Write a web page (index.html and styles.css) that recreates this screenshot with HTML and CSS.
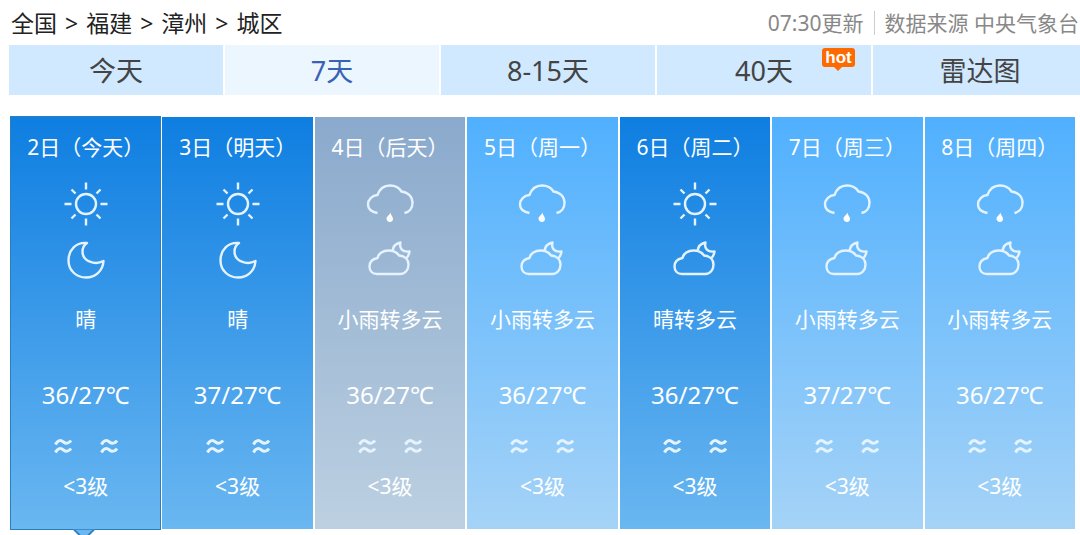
FILE: index.html
```html
<!DOCTYPE html>
<html lang="zh-CN">
<head>
  <meta charset="utf-8">
  <title>漳州天气预报</title>
  <link rel="stylesheet" href="styles.css">
</head>
<body>
  <svg class="sprite" aria-hidden="true">
    <symbol id="sun" viewBox="0 0 50 50">
      <circle cx="25" cy="25" r="10"/>
      <path d="M25 3.5v7M25 39.5v7M3.5 25h7M39.5 25h7M10.5 10.5l4 4M35.5 35.5l4 4M39.5 10.5l-4 4M14.5 35.5l-4 4"/>
    </symbol>
    <symbol id="moon" viewBox="0 0 50 50">
      <path d="M26 8C15 7 7.500 15 7.500 25.500C7.500 35.500 15.500 42.500 25 42.500C34.500 42.500 42 35.500 42.500 26C34 30.500 21.500 26.500 21.500 16.500C21.500 12.500 23 10 26 8Z"/>
    </symbol>
    <symbol id="rain" viewBox="0 0 50 50">
      <path d="M12.500 34C6.500 33 3 30 3 25.500C3 20.500 7 16.500 12.500 16C14.500 10 19 6.500 25 6.500C30 6.500 34 8.500 36.500 12.500C43.500 13.500 47.500 18 47.500 24C47.500 29 44.500 33 39.500 34"/>
      <path class="drop" d="M25.500 33.500C25.500 36 28 37.500 28 40C28 42 26.500 43 25 43C23 43 21.500 41.800 21.500 39.800C21.500 37.500 24.500 36 25.500 33.500Z"/>
    </symbol>
    <symbol id="cloud-night" viewBox="0 0 50 50">
      <path d="M12 39C7.500 39 4.500 36 4.500 31.500C4.500 27 7.500 24 12.500 23C13.500 18.500 18 15.500 23.500 15.500C28.500 15.500 32 17.500 34 20.500C40 21 43.500 24.500 43.500 29.500C43.500 35 40 39 35.500 39Z"/>
      <path d="M27.500 16C28 11.500 31 8.500 35.500 7.500C34 13.500 37.500 17.500 44.500 16.500C44 19.500 43 22 41 23.500"/>
    </symbol>
    <symbol id="wind" viewBox="0 0 64 16">
      <path d="M1.500 6.500C4 1.500 7 2 9.500 4S15 5.500 17 2.500M1.500 14.500C4 9.500 7 10 9.500 12S15 13.500 17 10.500M47.500 6.500C50 1.500 53 2 55.500 4S61 5.500 63 2.500M47.500 14.500C50 9.500 53 10 55.500 12S61 13.500 63 10.500"/>
    </symbol>
  </svg>

  <header class="header">
    <nav class="crumbs">
      <a href="#">全国</a>
      <span>&gt;</span>
      <a href="#">福建</a>
      <span>&gt;</span>
      <a href="#">漳州</a>
      <span>&gt;</span>
      <span>城区</span>
    </nav>
    <div class="source">
      <span class="updated">07:30更新</span>
      <span class="origin">数据来源 中央气象台</span>
    </div>
  </header>

  <nav class="tabs">
    <a class="tab" href="#">今天</a>
    <a class="tab active" href="#">7天</a>
    <a class="tab" href="#">8-15天</a>
    <a class="tab" href="#">40天<span class="hot">hot</span></a>
    <a class="tab" href="#">雷达图</a>
  </nav>

  <ul class="week">
    <li class="day clear selected">
      <h2 class="date">2日（今天）</h2>
      <svg class="icon"><use href="#sun"/></svg>
      <svg class="icon"><use href="#moon"/></svg>
      <p class="weather">晴</p>
      <p class="temp">36/27℃</p>
      <svg class="wind"><use href="#wind"/></svg>
      <p class="level">&lt;3级</p>
    </li>
    <li class="day clear">
      <h2 class="date">3日（明天）</h2>
      <svg class="icon"><use href="#sun"/></svg>
      <svg class="icon"><use href="#moon"/></svg>
      <p class="weather">晴</p>
      <p class="temp">37/27℃</p>
      <svg class="wind"><use href="#wind"/></svg>
      <p class="level">&lt;3级</p>
    </li>
    <li class="day rainy">
      <h2 class="date">4日（后天）</h2>
      <svg class="icon"><use href="#rain"/></svg>
      <svg class="icon"><use href="#cloud-night"/></svg>
      <p class="weather">小雨转多云</p>
      <p class="temp">36/27℃</p>
      <svg class="wind"><use href="#wind"/></svg>
      <p class="level">&lt;3级</p>
    </li>
    <li class="day">
      <h2 class="date">5日（周一）</h2>
      <svg class="icon"><use href="#rain"/></svg>
      <svg class="icon"><use href="#cloud-night"/></svg>
      <p class="weather">小雨转多云</p>
      <p class="temp">36/27℃</p>
      <svg class="wind"><use href="#wind"/></svg>
      <p class="level">&lt;3级</p>
    </li>
    <li class="day clear">
      <h2 class="date">6日（周二）</h2>
      <svg class="icon"><use href="#sun"/></svg>
      <svg class="icon"><use href="#cloud-night"/></svg>
      <p class="weather">晴转多云</p>
      <p class="temp">36/27℃</p>
      <svg class="wind"><use href="#wind"/></svg>
      <p class="level">&lt;3级</p>
    </li>
    <li class="day">
      <h2 class="date">7日（周三）</h2>
      <svg class="icon"><use href="#rain"/></svg>
      <svg class="icon"><use href="#cloud-night"/></svg>
      <p class="weather">小雨转多云</p>
      <p class="temp">37/27℃</p>
      <svg class="wind"><use href="#wind"/></svg>
      <p class="level">&lt;3级</p>
    </li>
    <li class="day">
      <h2 class="date">8日（周四）</h2>
      <svg class="icon"><use href="#rain"/></svg>
      <svg class="icon"><use href="#cloud-night"/></svg>
      <p class="weather">小雨转多云</p>
      <p class="temp">36/27℃</p>
      <svg class="wind"><use href="#wind"/></svg>
      <p class="level">&lt;3级</p>
    </li>
  </ul>
</body>
</html>
```

FILE: styles.css
```css
:root {
  --tab-bg: #d0e9ff;
  --tab-active: #ebf6ff;
  --link-blue: #3a62b4;
  --hot: #ff6a00;
}

* {
  box-sizing: border-box;
}

body {
  margin: 0;
  min-height: 100vh;
  background: #fff;
  color: #222;
  font-family: "Noto Sans", "Noto Sans CJK SC", sans-serif;
  overflow: hidden;
}

a {
  color: inherit;
  text-decoration: none;
}

.sprite {
  display: none;
}

/* Header */
.header {
  display: flex;
  justify-content: space-between;
  align-items: center;
  height: 45px;
  padding: 0 1px 0 11px;
}

.crumbs {
  display: flex;
  gap: 8px;
  font-size: 23px;
  line-height: 32px;
}

.source {
  display: flex;
  align-items: center;
  font-size: 21px;
  line-height: 24px;
  color: #888;
}

.origin {
  margin-left: 10px;
  padding-left: 10px;
  border-left: 1px solid #ccc;
}

/* Tabs, the row runs past the right edge */
.tabs {
  display: flex;
  gap: 2px;
  margin: 0 -7px 0 9px;
}

.tab {
  position: relative;
  flex: 1;
  height: 50px;
  line-height: 52px;
  text-align: center;
  font-size: 27px;
  color: #444;
  background: var(--tab-bg);
}

.tab.active {
  color: var(--link-blue);
  background: var(--tab-active);
}

.hot {
  position: absolute;
  top: 3px;
  right: 16px;
  width: 33px;
  height: 19px;
  border-radius: 3px;
  background: var(--hot);
  color: #fff;
  font: bold 17px/19px "Liberation Sans", sans-serif;
}

.hot::after {
  content: "";
  position: absolute;
  top: 18px;
  left: 11px;
  border: solid transparent;
  border-width: 5px 5px 0;
  border-top-color: var(--hot);
}

/* Seven day cards */
.week {
  display: grid;
  grid-template-columns: repeat(7, 1fr);
  gap: 2px;
  margin: 22px 5px 0 10px;
  padding: 0;
  list-style: none;
}

.day {
  position: relative;
  display: flex;
  flex-direction: column;
  align-items: center;
  padding: 16px 0 29px;
  color: #fff;
  background: linear-gradient(#50b0fe, #a5d3f7);
}

.day.clear {
  background: linear-gradient(#0e7ee1, #6ab7f1);
}

.day.rainy {
  background: linear-gradient(#8aa9cc, #bcd0e1);
}

.day.selected {
  margin: -1px -1px -1px 0;
  border: 1px solid #2a7fbd;
}

.day.selected::after {
  content: "";
  position: absolute;
  bottom: -8px;
  left: 50%;
  width: 18px;
  height: 18px;
  margin-left: -12px;
  border: solid #2a7fbd;
  border-width: 0 2px 2px 0;
  background: #6ab7f1;
  transform: rotate(45deg);
  clip-path: polygon(100% 20%, 100% 100%, 20% 100%);
}

.date,
.weather,
.temp,
.level {
  margin: 0;
  font-size: 21px;
  font-weight: normal;
  line-height: 28px;
  white-space: nowrap;
}

.date {
  margin-bottom: 18px;
}

.icon {
  width: 50px;
  height: 50px;
  margin-bottom: 6px;
  fill: none;
  stroke: #e4f3ff;
  stroke-width: 2.4;
  stroke-linejoin: round;
}

.drop {
  fill: #fff;
  stroke: none;
}

.weather {
  margin-top: 14px;
}

.temp {
  margin: 48px 0 29px;
  font-size: 24px;
}

.wind {
  width: 64px;
  height: 16px;
  margin-bottom: 18px;
  fill: none;
  stroke: #e4f3ff;
  stroke-width: 3;
}
```
